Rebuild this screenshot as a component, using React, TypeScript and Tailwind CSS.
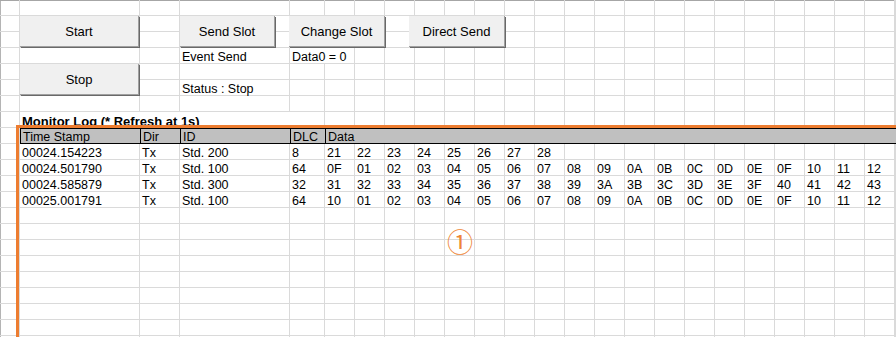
import React from 'react';

const hex = (n: number) => n.toString(16).toUpperCase().padStart(2, '0');
const range = (from: number, to: number) => {
  const out: string[] = [];
  for (let i = from; i <= to; i++) out.push(hex(i));
  return out;
};

interface LogRow {
  time: string;
  dir: string;
  id: string;
  dlc: string;
  data: string[];
}

const logRows: LogRow[] = [
  { time: '00024.154223', dir: 'Tx', id: 'Std. 200', dlc: '8', data: range(0x21, 0x28) },
  { time: '00024.501790', dir: 'Tx', id: 'Std. 100', dlc: '64', data: ['0F', ...range(0x01, 0x12)] },
  { time: '00024.585879', dir: 'Tx', id: 'Std. 300', dlc: '32', data: range(0x31, 0x43) },
  { time: '00025.001791', dir: 'Tx', id: 'Std. 100', dlc: '64', data: ['10', ...range(0x01, 0x12)] },
];

const ROWS = 22;
const COLS = 25;

const rowClasses = ['row-start-10', 'row-start-11', 'row-start-12', 'row-start-13'];

interface SheetButtonProps {
  label: string;
  className: string;
}

const SheetButton: React.FC<SheetButtonProps> = ({ label, className }) => (
  <button
    className={`${className} h-[31px] pt-[2px] self-start justify-self-start bg-[#f0f0f0] border-r border-b border-[#a0a0a0] shadow-[1px_1px_0_#696969] text-[13px] text-black`}
  >
    {label}
  </button>
);

const App: React.FC = () => {
  return (
    <div className="relative w-[896px] h-[337px] overflow-hidden bg-white text-black font-['Liberation_Sans',Arial,sans-serif] text-[12.5px] leading-[16px]">
      <div className="grid grid-cols-[20px_120px_40px_110px_35px_repeat(19,30px)_1fr] auto-rows-[16px] shadow-[inset_0_1px_0_#a6a6a6,inset_1px_0_0_#b4b4b4]">
        {/* sheet gridlines */}
        {Array.from({ length: ROWS }).map((_, r) => (
          <div key={r} className="col-start-1 col-span-25 grid grid-cols-subgrid" style={{ gridRow: r + 1 }}>
            {Array.from({ length: COLS }).map((__, c) => (
              <div key={c} className="border-r border-b border-[#dadada]" />
            ))}
          </div>
        ))}

        {/* controls */}
        <SheetButton label="Start" className="col-start-2 row-start-2 row-span-2 w-[119px]" />
        <SheetButton label="Send Slot" className="col-start-4 row-start-2 row-span-2 w-[95px]" />
        <SheetButton label="Change Slot" className="col-start-5 col-span-4 row-start-2 row-span-2 w-[96px] -ml-px" />
        <SheetButton label="Direct Send" className="col-start-8 col-span-4 row-start-2 row-span-2 ml-[24px] w-[96px]" />
        <SheetButton label="Stop" className="col-start-2 row-start-5 row-span-2 w-[119px]" />

        <div className="col-start-4 row-start-4 px-[2px] pt-px whitespace-nowrap">Event Send</div>
        <div className="col-start-5 col-span-2 row-start-4 px-[2px] pt-px whitespace-nowrap bg-white border-r border-b border-[#dadada]">
          Data0 = 0
        </div>
        <div className="col-start-4 row-start-6 px-[2px] pt-px whitespace-nowrap">Status : Stop</div>

        <div className="col-start-2 col-span-3 row-start-8 px-[2px] pt-[2px] whitespace-nowrap bg-white font-bold text-[13px]">
          Monitor Log (* Refresh at 1s)
        </div>

        {/* log header */}
        <div className="col-start-2 row-start-9 px-[2px] bg-[#c0c0c0] border-y border-l border-black whitespace-nowrap">Time Stamp</div>
        <div className="col-start-3 row-start-9 px-[2px] bg-[#c0c0c0] border-y border-l border-black">Dir</div>
        <div className="col-start-4 row-start-9 px-[2px] bg-[#c0c0c0] border-y border-l border-black">ID</div>
        <div className="col-start-5 row-start-9 px-[2px] bg-[#c0c0c0] border-y border-l border-black">DLC</div>
        <div className="col-start-6 col-span-20 row-start-9 px-[2px] bg-[#c0c0c0] border-y border-l border-black">Data</div>

        {/* log rows */}
        {logRows.map((row, i) => (
          <div key={row.time} className={`${rowClasses[i]} col-start-1 col-span-25 grid grid-cols-subgrid pt-px`}>
            <div />
            <div className="px-[2px] whitespace-nowrap">{row.time}</div>
            <div className="px-[2px]">{row.dir}</div>
            <div className="px-[2px] whitespace-nowrap">{row.id}</div>
            <div className="px-[2px]">{row.dlc}</div>
            {row.data.map((b, j) => (
              <div key={j} className="px-[2px]">{b}</div>
            ))}
          </div>
        ))}
      </div>

      {/* selection frame and annotation */}
      <div className="absolute left-[16px] top-[125px] right-0 bottom-0 border-l-[3px] border-t-[3px] border-[#ed7d31] pointer-events-none" />
      <div className="absolute left-[447px] top-[228px] text-[26px] leading-none text-[#ee8536] font-['Noto_Sans_CJK_JP',sans-serif]">
        ①
      </div>
    </div>
  );
};

export default App;
